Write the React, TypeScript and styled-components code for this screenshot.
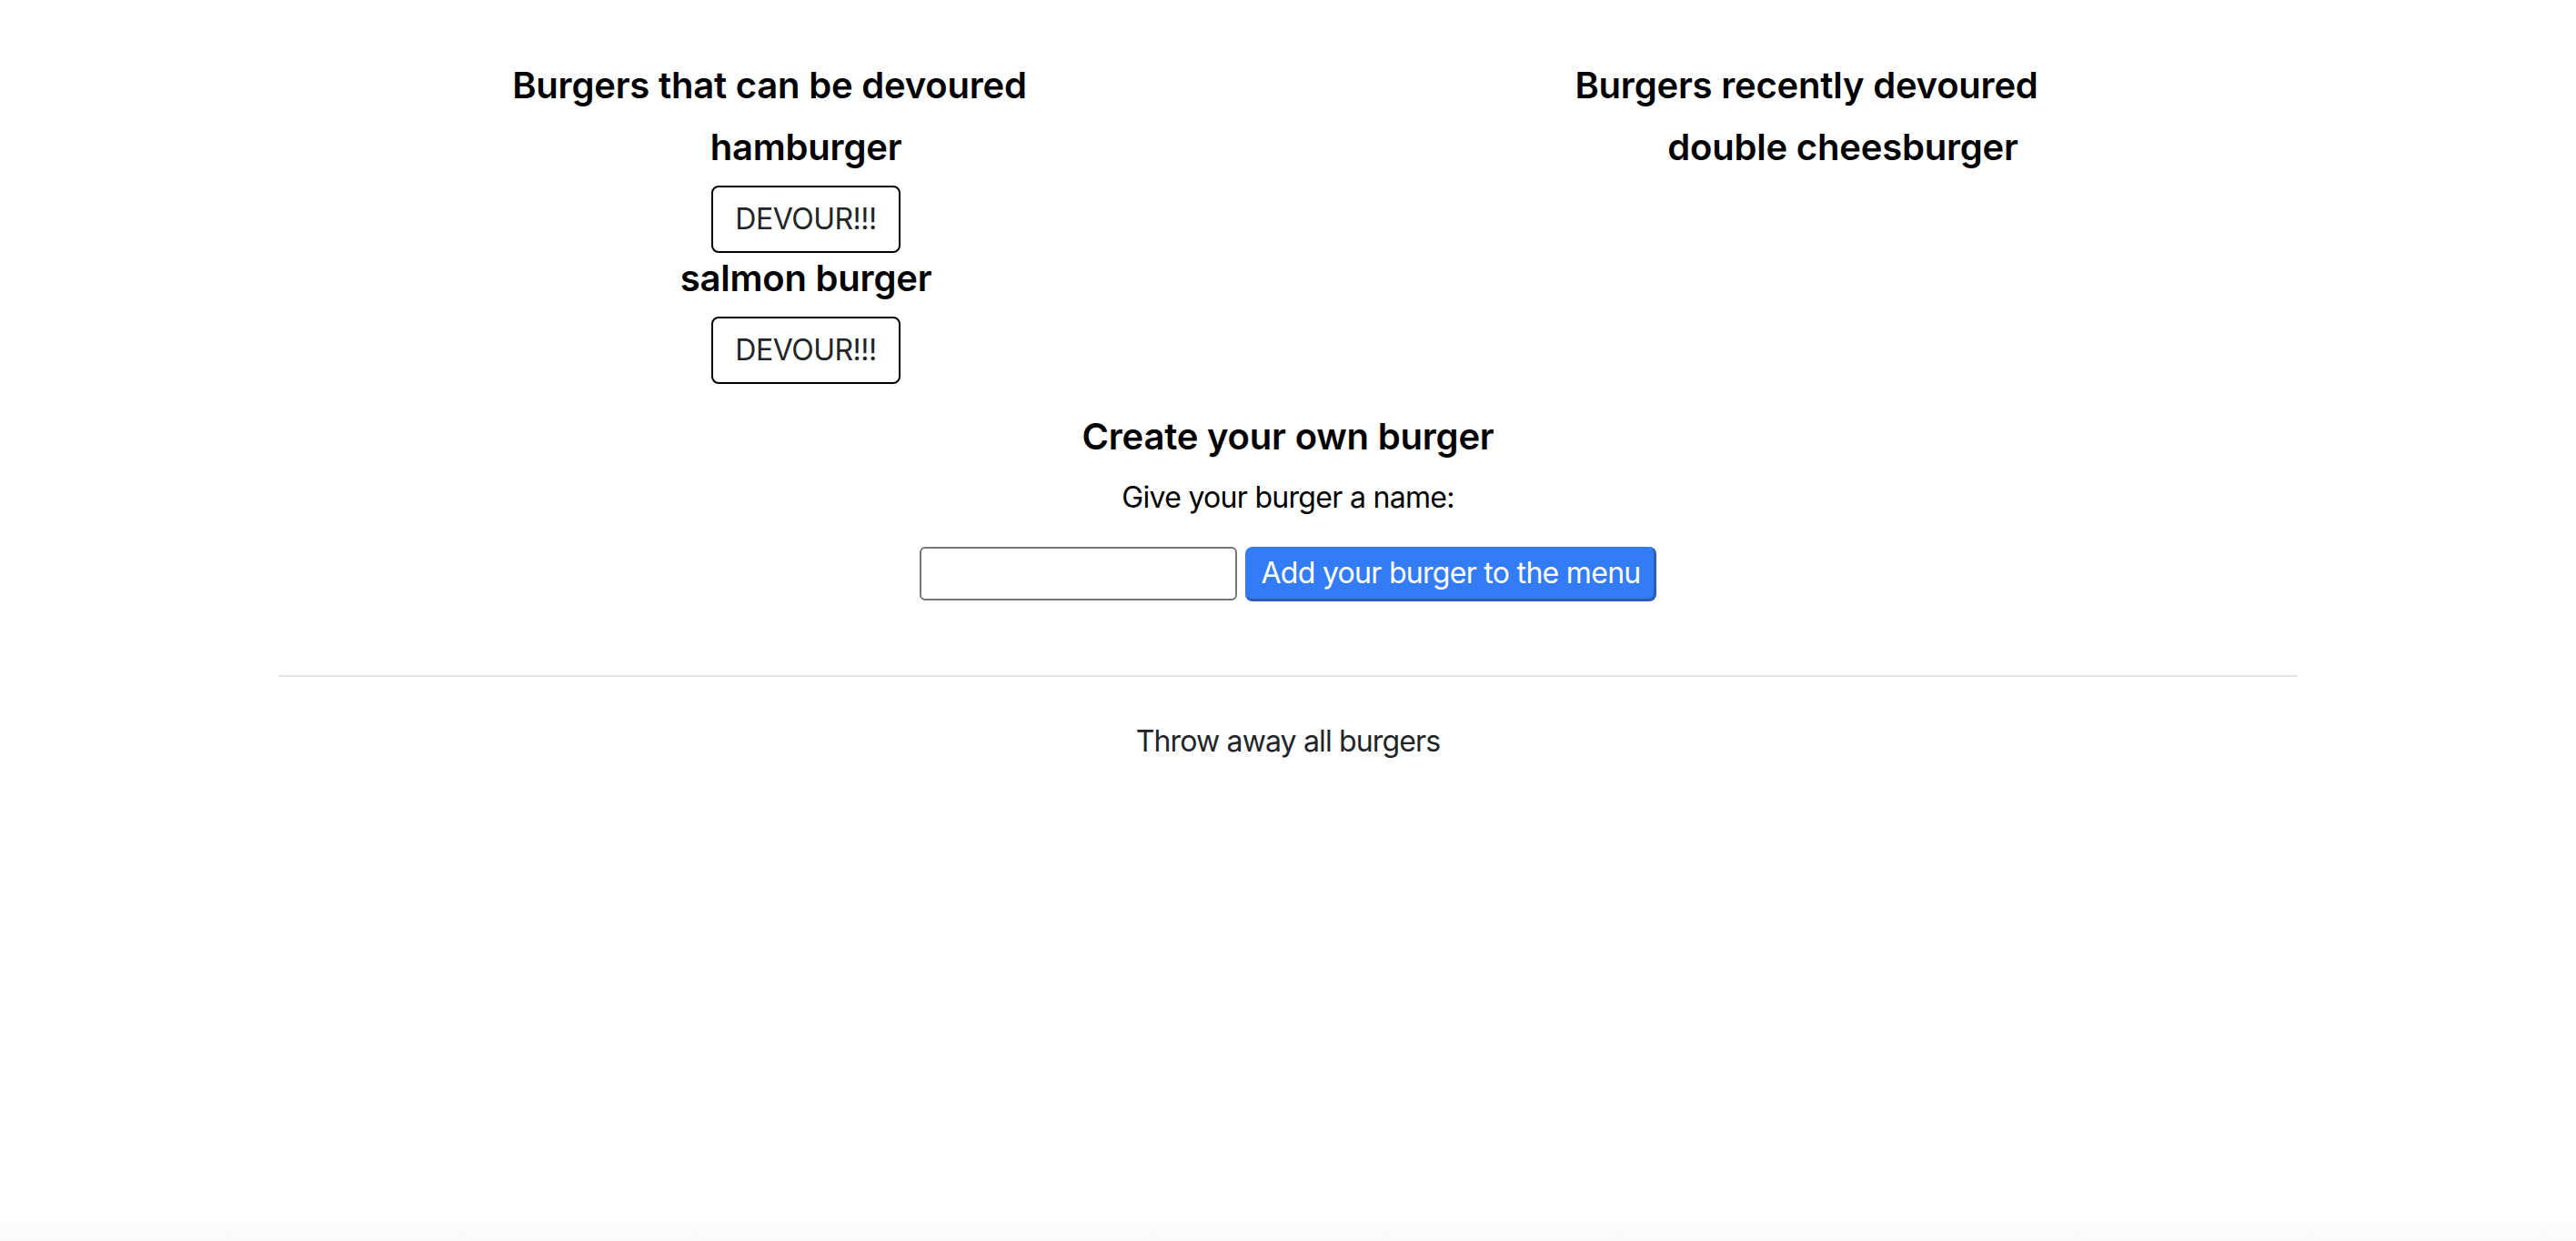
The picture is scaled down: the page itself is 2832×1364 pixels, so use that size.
import React from "react";
import styled, { createGlobalStyle } from "styled-components";

const GlobalStyle = createGlobalStyle`
  html, body {
    margin: 0;
    padding: 0;
    background: #ffffff;
  }
  body {
    font-family: Inter, "Noto Sans", "Liberation Sans", sans-serif;
    color: #000000;
  }
  *, *::before, *::after {
    box-sizing: border-box;
  }
`;

const Page = styled.div`
  min-height: 100vh;
  display: flex;
  flex-direction: column;
`;

const Container = styled.main`
  flex: 1;
  width: 2280px;
  max-width: 100%;
  margin: 0 auto;
  padding: 70px 30px 0;
`;

const Columns = styled.div`
  display: grid;
  grid-template-columns: 1fr 1fr;
  column-gap: 60px;
  align-items: start;
`;

const Column = styled.section`
  text-align: center;
`;

const Heading = styled.h5<{ $gap?: number }>`
  margin: 0 0 ${(p) => (p.$gap ?? 20)}px;
  font-size: 40px;
  line-height: 48px;
  font-weight: 600;
  letter-spacing: -0.2px;
  color: #000000;
`;

const BurgerList = styled.ul`
  list-style: none;
  margin: 0;
  padding: 0 0 0 80px;
`;

const BurgerItem = styled.li`
  display: flex;
  flex-direction: column;
  align-items: center;
`;

const DevourButton = styled.button`
  display: block;
  height: 74px;
  margin: 0 0 4px;
  padding: 12px 24px;
  border: 2px solid #000000;
  border-radius: 8px;
  background: #ffffff;
  color: #212529;
  font-family: inherit;
  font-size: 32px;
  line-height: 46px;
  letter-spacing: -0.5px;
  cursor: pointer;
`;

const CreateSection = styled.section`
  margin-top: 30px;
  text-align: center;
`;

const NameLabel = styled.p`
  margin: 0 0 30px;
  font-size: 32px;
  line-height: 48px;
  letter-spacing: -0.7px;
  color: #000000;
`;

const FormRow = styled.form`
  display: flex;
  justify-content: center;
  align-items: flex-start;
  gap: 9px;
`;

const NameInput = styled.input`
  width: 349px;
  height: 59px;
  padding: 0 8px;
  border: 2px solid #767676;
  border-radius: 6px;
  background: #ffffff;
  font-family: inherit;
  font-size: 28px;
`;

const AddButton = styled.button`
  height: 60px;
  padding: 0 14px 0 17px;
  border: none;
  border-right: 3px solid #2a5cb5;
  border-bottom: 3px solid #2a5cb5;
  border-radius: 8px;
  background: #347bf6;
  color: #ffffff;
  font-family: inherit;
  font-size: 32px;
  line-height: 57px;
  letter-spacing: -0.7px;
  cursor: pointer;
`;

const Divider = styled.hr`
  margin: 81px 0 0;
  border: 0;
  border-top: 2px solid rgba(0, 0, 0, 0.1);
`;

const ThrowButton = styled.button`
  display: block;
  margin: 47px auto 0;
  padding: 0;
  border: none;
  background: none;
  color: #212529;
  font-family: inherit;
  font-size: 32px;
  line-height: 48px;
  letter-spacing: -0.85px;
  cursor: pointer;
`;

const FooterShade = styled.footer`
  height: 26px;
  background: linear-gradient(to bottom, #ffffff, #f9f9f9);
`;

const available = ["hamburger", "salmon burger"];
const devoured = ["double cheesburger"];

export default function App() {
  return (
    <Page>
      <GlobalStyle />
      <Container>
        <Columns>
          <Column>
            <Heading>Burgers that can be devoured</Heading>
            <BurgerList>
              {available.map((name) => (
                <BurgerItem key={name}>
                  <Heading $gap={18}>{name}</Heading>
                  <DevourButton type="button">DEVOUR!!!</DevourButton>
                </BurgerItem>
              ))}
            </BurgerList>
          </Column>
          <Column>
            <Heading>Burgers recently devoured</Heading>
            <BurgerList>
              {devoured.map((name) => (
                <BurgerItem key={name}>
                  <Heading $gap={0}>{name}</Heading>
                </BurgerItem>
              ))}
            </BurgerList>
          </Column>
        </Columns>
        <CreateSection>
          <Heading $gap={19}>Create your own burger</Heading>
          <NameLabel>Give your burger a name:</NameLabel>
          <FormRow onSubmit={(e) => e.preventDefault()}>
            <NameInput type="text" aria-label="Burger name" />
            <AddButton type="submit">Add your burger to the menu</AddButton>
          </FormRow>
        </CreateSection>
        <Divider />
        <ThrowButton type="button">Throw away all burgers</ThrowButton>
      </Container>
      <FooterShade />
    </Page>
  );
}
